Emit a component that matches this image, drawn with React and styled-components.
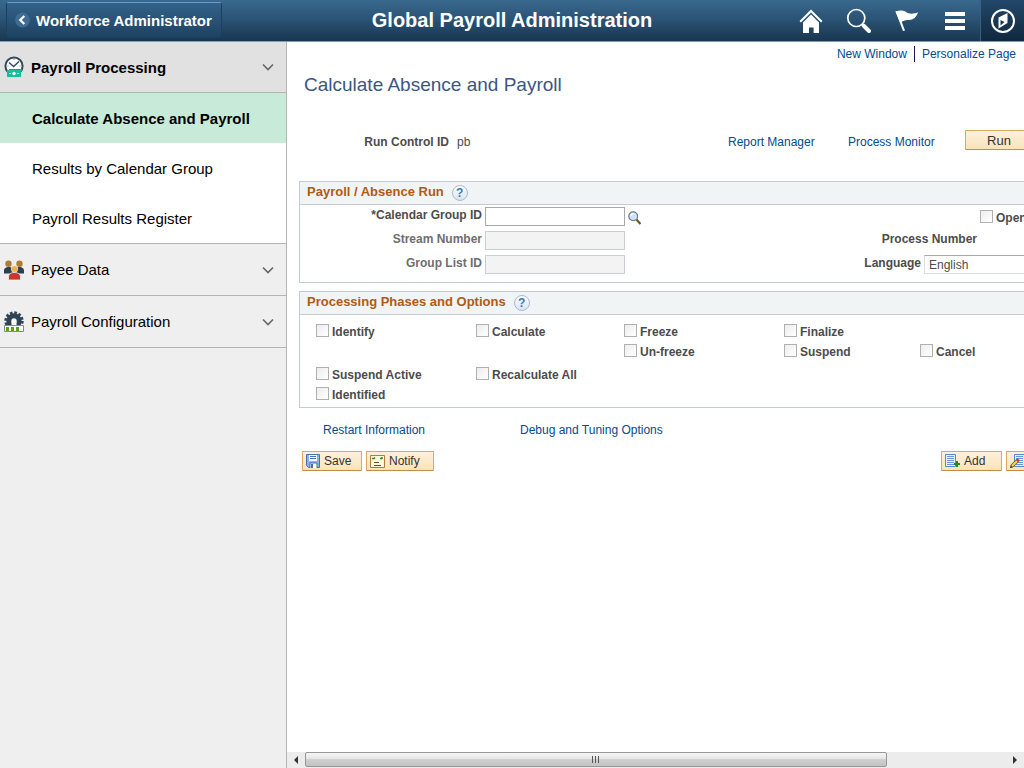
import React, { useRef } from "react";
import styled, { createGlobalStyle, css } from "styled-components";

const GlobalStyle = createGlobalStyle`
  * { box-sizing: border-box; }
  body { margin: 0; background: #fff; }
  body, button, input, select { font-family: "Liberation Sans", Arial, sans-serif; }
  ul { list-style: none; margin: 0; padding: 0; }
  a { text-decoration: none; }
`;

const Page = styled.div`
  display: flex;
  flex-direction: column;
  min-height: 100vh;
`;

/* ---------- banner ---------- */
const Banner = styled.header`
  display: grid;
  grid-template-columns: 1fr auto 1fr;
  height: 42px;
  background: linear-gradient(#39698f, #2b5476 45%, #193650);
  border-bottom: 1px solid #7f9db9;
`;

const BackButton = styled.button`
  justify-self: start;
  display: flex;
  align-items: center;
  gap: 6px;
  height: 36px;
  margin: 2px 0 0 6px;
  padding: 0 9px 0 8px;
  border: 1px solid #1d3f5e;
  border-top-color: #6b9cc4;
  border-radius: 3px;
  background: linear-gradient(#33628a, #1f4261);
  color: #fff;
  font-size: 15px;
  font-weight: bold;
  white-space: nowrap;
`;

const BannerTitle = styled.h1`
  margin: 0;
  color: #fff;
  font-size: 20px;
  line-height: 40px;
  white-space: nowrap;
`;

const BannerTools = styled.nav`
  justify-self: end;
  display: flex;
`;

const ToolButton = styled.button`
  display: flex;
  align-items: center;
  justify-content: center;
  width: ${(p) => (p.$active ? 44 : 48)}px;
  padding: 0;
  border: 0;
  background: none;
  ${(p) =>
    p.$active &&
    css`
      margin-left: 1px;
      border-left: 1px solid #3a5f80;
      background: linear-gradient(#23486a, #10283e);
    `}
`;

/* ---------- side menu ---------- */
const Body = styled.div`
  display: flex;
  flex: 1;
`;

const SideMenu = styled.nav`
  flex: 0 0 287px;
  border-right: 1px solid #b4b4b4;
  background: #efefef;
`;

const SectionHead = styled.button`
  display: flex;
  align-items: center;
  gap: 7px;
  width: 100%;
  height: ${(p) => (p.$open ? 51 : 52)}px;
  padding: 0 12px 0 4px;
  border: 0;
  border-bottom: 1px solid #b4b4b4;
  background: ${(p) => (p.$open ? "#e1e1e1" : "#efefef")};
  color: #000;
  font-size: 15px;
  font-weight: ${(p) => (p.$open ? "bold" : "normal")};
  text-align: left;
`;

const SectionName = styled.span`
  flex: 1;
`;

const SectionItems = styled.ul`
  border-bottom: 1px solid #b4b4b4;
  background: #fff;
`;

const SectionLink = styled.a`
  display: block;
  height: 50px;
  padding-left: 32px;
  background: ${(p) => (p.$current ? "#c8ebd9" : "#fff")};
  color: #000;
  font-size: 15px;
  font-weight: ${(p) => (p.$current ? "bold" : "normal")};
  line-height: 51px;
`;

/* ---------- work area ---------- */
const WorkArea = styled.main`
  display: flex;
  flex-direction: column;
  flex: 1;
  min-width: 0;
  color: #4c4c4c;
  font-size: 12px;
  line-height: 16px;
`;

const PageLinks = styled.div`
  display: flex;
  justify-content: flex-end;
  padding: 4px 8px 0 0;

  a + a {
    margin-left: 7px;
    padding-left: 7px;
    border-left: 1px solid #1a1a4a;
  }
`;

const TextLink = styled.a`
  color: #004b91;
  white-space: nowrap;
`;

const Viewport = styled.div`
  flex: 1;
  overflow-x: auto;
  scrollbar-width: none;
`;

const Sheet = styled.div`
  min-width: 890px;
  padding: 10px 12px 0;
`;

const Title = styled.h2`
  margin: 0 0 32px 5px;
  color: #3c5684;
  font-size: 19px;
  font-weight: normal;
  line-height: 26px;
`;

const RunRow = styled.div`
  display: grid;
  grid-template-columns: 150px 271px 120px 125px 68px;
  align-items: center;
  height: 20px;
  margin: 0 0 31px;
`;

const RunLabel = styled.span`
  padding-top: 4px;
  text-align: right;
  font-weight: bold;
`;

const RunValue = styled.span`
  padding: 4px 0 0 8px;
`;

const RunLink = styled(TextLink)`
  padding: 4px 0 0 8px;
`;

const PushButton = styled.button`
  display: flex;
  align-items: center;
  justify-content: ${(p) => (p.$icon ? "flex-start" : "center")};
  gap: 4px;
  width: ${(p) => p.$width}px;
  height: 20px;
  padding: 0 3px;
  border: 1px solid #dda95f;
  border-bottom-color: #c48f45;
  border-radius: 1px;
  background: linear-gradient(#fdf1dc, #fae3b8);
  color: #333;
  font-size: ${(p) => (p.$icon ? 12 : 13)}px;

  svg { flex: none; }
`;

const Group = styled.section`
  margin-bottom: 8px;
  border: 1px solid #c5cbd3;
`;

const GroupHead = styled.div`
  display: flex;
  gap: 8px;
  height: 23px;
  padding: 2px 7px;
  border-bottom: 1px solid #c5cbd3;
  background: #f0f4f5;
`;

const GroupName = styled.h3`
  margin: 0;
  color: #b25a12;
  font-size: 13px;
  line-height: 16px;
`;

const HelpButton = styled.button`
  width: 16px;
  height: 16px;
  margin-top: 1px;
  padding: 0;
  border: 1px solid #a9bbd3;
  border-radius: 50%;
  background: linear-gradient(#fff, #d9e3f0);
  color: #4377b1;
  font-size: 12px;
  font-weight: bold;
  line-height: 14px;
`;

const RunFields = styled.div`
  display: grid;
  grid-template-columns: 561px 1fr;
  grid-auto-rows: 24px;
  padding: 2px 0 3px;
`;

const Field = styled.div`
  display: flex;
  align-items: flex-start;
  gap: 3px;
`;

const FieldLabel = styled.label`
  width: ${(p) => p.$width}px;
  color: ${(p) => (p.$muted ? "#6e6e6e" : "#4c4c4c")};
  font-weight: bold;
  text-align: right;
  white-space: nowrap;
`;

const TextBox = styled.input`
  width: 140px;
  height: 19px;
  padding: 0 3px;
  border: 1px solid #a8a8a8;
  background: #fff;
  font-size: 12px;

  &:disabled {
    border-color: #cbcfd3;
    background: #f3f3f3;
  }
`;

const LookupButton = styled.button`
  display: flex;
  padding: 4px 0 0;
  border: 0;
  background: none;
`;

const LanguageSelect = styled.select`
  width: 140px;
  height: 19px;
  padding: 0 4px;
  appearance: none;
  border: 1px solid #dcdce4;
  border-top-color: #a8a8a8;
  background: #fff;
  color: #4c4c4c;
  font-size: 12px;
`;

const OpenField = styled.div`
  padding: 3px 0 0 119px;
`;

const Check = styled.label`
  display: flex;
  align-items: flex-start;
  gap: 3px;
  font-weight: bold;
  white-space: nowrap;
`;

const CheckBox = styled.input`
  flex: none;
  width: 13px;
  height: 13px;
  margin: 0;
  appearance: none;
  border: 1px solid #b0b0b0;
  background: linear-gradient(135deg, #ededed, #fff);

  &:checked { background: #6f93bd; }
`;

const OptionGrid = styled.div`
  display: grid;
  grid-template-columns: 160px 148px 160px 136px auto;
  grid-template-rows: 20px 23px 20px 20px;
  padding: 9px 0 0 16px;
`;

const OptionCell = styled.div`
  grid-column: ${(p) => p.$col};
  grid-row: ${(p) => p.$row};
`;

const BottomLinks = styled.div`
  display: grid;
  grid-template-columns: 197px auto;
  justify-content: start;
  margin: 14px 0 13px 24px;
`;

const ActionBar = styled.div`
  display: flex;
  gap: 4px;
  padding-left: 3px;
`;

const ActionSpacer = styled.div`
  width: 499px;
  flex: none;
`;

/* ---------- horizontal scroller ---------- */
const Scroller = styled.div`
  display: flex;
  height: 16px;
  background: #ececec;
`;

const ScrollArrow = styled.button`
  display: flex;
  align-items: center;
  justify-content: center;
  width: 18px;
  padding: 0;
  border: 0;
  background: none;
`;

const ScrollTrack = styled.div`
  flex: 1;
`;

const ScrollThumb = styled.div`
  display: flex;
  align-items: center;
  justify-content: center;
  gap: 2px;
  width: 83%;
  height: 15px;
  border: 1px solid #979797;
  border-radius: 2px;
  background: linear-gradient(#f5f5f5, #e6e6e6 45%, #cfcfcf 50%, #c3c3c3);
`;

const Grip = styled.i`
  width: 1px;
  height: 7px;
  background: #555;
`;

/* ---------- drawings ---------- */
const BackIcon = () => (
  <svg width="15" height="16" viewBox="0 0 15 16" fill="none">
    <circle cx="7.5" cy="8" r="7.4" fill="#3f6c93" />
    <path d="M9.3 4 5.3 8l4 4" stroke="#fff" strokeWidth="2.2" />
  </svg>
);

const HomeIcon = () => (
  <svg width="24" height="24" viewBox="0 0 24 24">
    <path d="M1.200 12.800 12 2l10.800 10.800" fill="none" stroke="#fff" strokeWidth="2" />
    <path d="M4 13.500 12 5.500l8 8V24h-5.400v-5.500H10V24H4z" fill="#fff" />
  </svg>
);

const SearchIcon = () => (
  <svg width="26" height="26" viewBox="0 0 26 26" fill="none" stroke="#fff">
    <circle cx="10.300" cy="10" r="8.500" strokeWidth="1.700" />
    <path d="m16 16 2 2" strokeWidth="2" />
    <path d="m17.500 17.500 5.500 5.500" strokeWidth="4" strokeLinecap="round" />
  </svg>
);

const FlagIcon = () => (
  <svg width="26" height="24" viewBox="0 0 26 24" fill="#fff">
    <path d="M1.500 2.500 3.500 2 11 21.500l-2 .5z" />
    <path d="M1.500 2.500c4-1.500 8-1.500 10.500.5 3 2.200 7 2.300 12 .3-1.500 5-5 8-9.500 7.700-3-.2-5.500.5-8 3z" />
  </svg>
);

const MenuIcon = () => (
  <svg width="22" height="20" viewBox="0 0 22 20" fill="#fff">
    <path d="M1 1h20v4H1zM1 8h20v4H1zM1 15h20v4H1z" />
  </svg>
);

const CompassIcon = () => (
  <svg width="26" height="26" viewBox="0 0 26 26">
    <circle cx="13" cy="13" r="11" fill="none" stroke="#fff" strokeWidth="2" />
    <path fillRule="evenodd" d="m8.500 9.500 9-4.500v10l-9 5.500zM10.500 12v5.500l4-3.500z" fill="#fff" />
  </svg>
);

const ClockCashIcon = () => (
  <svg width="20" height="22" viewBox="0 0 20 22">
    <circle cx="10" cy="10" r="8.600" fill="#fff" stroke="#34495e" strokeWidth="2" />
    <path d="m5 6.500 4.600 4L15 5.500" fill="none" stroke="#34495e" strokeWidth="1.500" />
    <path d="M10 3v1M3.500 10h1M15.500 10h1" stroke="#7b8794" />
    <path d="M5 13h13v2H5z" fill="#16a085" />
    <path d="M3 14h14v7H3z" fill="#1abc9c" />
    <circle cx="10" cy="17.500" r="1.700" fill="#fff" />
    <path d="M5 17.500h2M13 17.500h2" stroke="#b5f0e2" />
  </svg>
);

const PeopleIcon = () => (
  <svg width="20" height="20" viewBox="0 0 20 20">
    <path d="M0 13.500V11c0-3 2-4 5-4s4 2 4 4v2.500zM11 13.500V11c0-2 1-4 4-4s5 1 5 4v2.500z" fill="#2c3e50" />
    <circle cx="4.500" cy="3.800" r="3.200" fill="#b07d2e" />
    <circle cx="15.500" cy="3.800" r="3.200" fill="#b07d2e" />
    <path d="M4.500 20v-3c0-3 2.500-4.500 6-4.500s6 1.500 6 4.500v3z" fill="#c9362b" stroke="#efefef" strokeWidth=".8" />
    <circle cx="10.500" cy="9" r="3.300" fill="#efb04c" stroke="#efefef" strokeWidth=".6" />
  </svg>
);

const GearIcon = () => (
  <svg width="20" height="22" viewBox="0 0 20 22">
    <circle cx="10" cy="10" r="8.200" fill="none" stroke="#2f4356" strokeWidth="3" strokeDasharray="2.600 1.693" />
    <circle cx="10" cy="10" r="5.200" fill="none" stroke="#2f4356" strokeWidth="5" />
    <path d="M.5 14.500h19v6H.5z" fill="#fff" stroke="#7f8c8d" />
    <path d="M2 16h3v4H2zM7 16h3v4H7zM12 16h3v4h-3z" fill="#5aa512" />
    <path d="M7.500 14v-3a2.500 2.500 0 0 1 5 0v3z" fill="#fff" />
  </svg>
);

const ChevronIcon = () => (
  <svg width="12" height="8" viewBox="0 0 12 8" fill="none">
    <path d="m1 1.500 5 5 5-5" stroke="#666" strokeWidth="1.600" />
  </svg>
);

const LookupIcon = () => (
  <svg width="13" height="14" viewBox="0 0 13 14">
    <path d="m8.500 8.500 4 4.500" stroke="#6b5a1e" strokeWidth="2.200" />
    <circle cx="5.200" cy="5.200" r="4.400" fill="#cfe4fa" stroke="#6f7780" strokeWidth="1.200" />
    <path d="M3 5a2.500 2.500 0 0 1 2.500-2.500" stroke="#fff" strokeWidth="1.300" fill="none" />
  </svg>
);

const SaveIcon = () => (
  <svg width="14" height="14" viewBox="0 0 14 14">
    <path d="M.5.5h13v13h-11l-2-2z" fill="#8bb0e8" stroke="#4470b8" />
    <path d="M3 1h8v6H3z" fill="#fff" />
    <path d="M4 2.500h6M4 4.500h6" stroke="#4470b8" />
    <path d="M4 9h7v5H4z" fill="#fff" />
    <path d="M5 10h2v4H5z" fill="#4470b8" />
    <path d="M4 14V9h7v5" fill="none" stroke="#4470b8" />
  </svg>
);

const NotifyIcon = () => (
  <svg width="15" height="13" viewBox="0 0 15 13">
    <path d="M.5.5h14v12H.5z" fill="#fff8d6" stroke="#b37a3c" />
    <path d="M2 3.500h2l1-1M10 3.500h2M12 2v2" stroke="#2c8a2c" strokeWidth="1.500" fill="none" />
    <path d="M4 7.500h5M4 10.500h7" stroke="#5c5434" />
  </svg>
);

const AddIcon = () => (
  <svg width="15" height="14" viewBox="0 0 15 14">
    <path d="M.5.5h10v12H.5z" fill="#e8f0fd" stroke="#5b86d6" />
    <path d="M2 2.500h7M2 4.500h7M2 6.500h7M2 8.500h7M2 10.500h7" stroke="#6d93e4" />
    <path d="M9 10h6M12 7v6" stroke="#1f8a2c" strokeWidth="2" />
  </svg>
);

const EditIcon = () => (
  <svg width="15" height="14" viewBox="0 0 15 14">
    <path d="M4.500.5h10v12h-10z" fill="#e8f0fd" stroke="#5b86d6" />
    <path d="M6 2.500h7M6 4.500h7M6 6.500h7M6 8.500h7M6 10.500h7" stroke="#6d93e4" />
    <path d="m1.500 12.500 6-6" stroke="#6b5a1e" strokeWidth="3.600" />
    <path d="m2 12 5.500-5.500" stroke="#f6d64a" strokeWidth="2" />
    <path d="m7 7 1.600-1.600" stroke="#d92b2b" strokeWidth="3.400" />
    <path d="M0 14l.6-2.600 2 2z" fill="#222" />
  </svg>
);

const ArrowIcon = ({ right }) => (
  <svg width="4" height="8" viewBox="0 0 4 8">
    <path d={right ? "M0 0v8l4-4z" : "M4 0v8L0 4z"} fill="#333" />
  </svg>
);

const options = [
  { name: "Identify", col: 1, row: 1 },
  { name: "Calculate", col: 2, row: 1 },
  { name: "Freeze", col: 3, row: 1 },
  { name: "Finalize", col: 4, row: 1 },
  { name: "Un-freeze", col: 3, row: 2 },
  { name: "Suspend", col: 4, row: 2 },
  { name: "Cancel", col: 5, row: 2 },
  { name: "Suspend Active", col: 1, row: 3 },
  { name: "Recalculate All", col: 2, row: 3 },
  { name: "Identified", col: 1, row: 4 },
];

const menuItems = ["Calculate Absence and Payroll", "Results by Calendar Group", "Payroll Results Register"];

function CheckField({ name }) {
  return (
    <Check>
      <CheckBox type="checkbox" />
      <span>{name}</span>
    </Check>
  );
}

function MenuSection({ icon, name, open }) {
  return (
    <SectionHead $open={open} aria-expanded={Boolean(open)}>
      {icon}
      <SectionName>{name}</SectionName>
      <ChevronIcon />
    </SectionHead>
  );
}

export default function App() {
  const viewport = useRef(null);
  const scroll = (left) => viewport.current.scrollBy({ left });

  return (
    <Page>
      <GlobalStyle />
      <Banner>
        <BackButton>
          <BackIcon />
          Workforce Administrator
        </BackButton>
        <BannerTitle>Global Payroll Administration</BannerTitle>
        <BannerTools>
          <ToolButton aria-label="Home"><HomeIcon /></ToolButton>
          <ToolButton aria-label="Search"><SearchIcon /></ToolButton>
          <ToolButton aria-label="Notifications"><FlagIcon /></ToolButton>
          <ToolButton aria-label="Actions"><MenuIcon /></ToolButton>
          <ToolButton $active aria-label="Navigator"><CompassIcon /></ToolButton>
        </BannerTools>
      </Banner>
      <Body>
        <SideMenu>
          <MenuSection open icon={<ClockCashIcon />} name="Payroll Processing" />
          <SectionItems>
            {menuItems.map((item, i) => (
              <li key={item}>
                <SectionLink href="#" $current={i === 0}>{item}</SectionLink>
              </li>
            ))}
          </SectionItems>
          <MenuSection icon={<PeopleIcon />} name="Payee Data" />
          <MenuSection icon={<GearIcon />} name="Payroll Configuration" />
        </SideMenu>
        <WorkArea>
          <PageLinks>
            <TextLink href="#">New Window</TextLink>
            <TextLink href="#">Personalize Page</TextLink>
          </PageLinks>
          <Viewport ref={viewport}>
            <Sheet>
              <Title>Calculate Absence and Payroll</Title>
              <RunRow>
                <RunLabel>Run Control ID</RunLabel>
                <RunValue>pb</RunValue>
                <RunLink href="#">Report Manager</RunLink>
                <RunLink href="#">Process Monitor</RunLink>
                <PushButton $width={68}>Run</PushButton>
              </RunRow>

              <Group>
                <GroupHead>
                  <GroupName>Payroll / Absence Run</GroupName>
                  <HelpButton aria-label="Help">?</HelpButton>
                </GroupHead>
                <RunFields>
                  <Field>
                    <FieldLabel htmlFor="calendar" $width={182}>*Calendar Group ID</FieldLabel>
                    <TextBox id="calendar" />
                    <LookupButton aria-label="Look up calendar group"><LookupIcon /></LookupButton>
                  </Field>
                  <OpenField><CheckField name="Open" /></OpenField>
                  <Field>
                    <FieldLabel htmlFor="stream" $width={182} $muted>Stream Number</FieldLabel>
                    <TextBox id="stream" disabled />
                  </Field>
                  <Field>
                    <FieldLabel as="span" $width={116}>Process Number</FieldLabel>
                  </Field>
                  <Field>
                    <FieldLabel htmlFor="grouplist" $width={182} $muted>Group List ID</FieldLabel>
                    <TextBox id="grouplist" disabled />
                  </Field>
                  <Field>
                    <FieldLabel htmlFor="language" $width={60}>Language</FieldLabel>
                    <LanguageSelect id="language"><option>English</option></LanguageSelect>
                  </Field>
                </RunFields>
              </Group>

              <Group>
                <GroupHead>
                  <GroupName>Processing Phases and Options</GroupName>
                  <HelpButton aria-label="Help">?</HelpButton>
                </GroupHead>
                <OptionGrid>
                  {options.map((o) => (
                    <OptionCell key={o.name} $col={o.col} $row={o.row}>
                      <CheckField name={o.name} />
                    </OptionCell>
                  ))}
                </OptionGrid>
              </Group>

              <BottomLinks>
                <TextLink href="#">Restart Information</TextLink>
                <TextLink href="#">Debug and Tuning Options</TextLink>
              </BottomLinks>
              <ActionBar>
                <PushButton $icon $width={60}><SaveIcon />Save</PushButton>
                <PushButton $icon $width={68}><NotifyIcon />Notify</PushButton>
                <ActionSpacer />
                <PushButton $icon $width={61}><AddIcon />Add</PushButton>
                <PushButton $icon $width={120} aria-label="Update or display"><EditIcon /></PushButton>
              </ActionBar>
            </Sheet>
          </Viewport>
          <Scroller>
            <ScrollArrow aria-label="Scroll left" onClick={() => scroll(-80)}><ArrowIcon /></ScrollArrow>
            <ScrollTrack>
              <ScrollThumb><Grip /><Grip /><Grip /></ScrollThumb>
            </ScrollTrack>
            <ScrollArrow aria-label="Scroll right" onClick={() => scroll(80)}><ArrowIcon right /></ScrollArrow>
          </Scroller>
        </WorkArea>
      </Body>
    </Page>
  );
}
